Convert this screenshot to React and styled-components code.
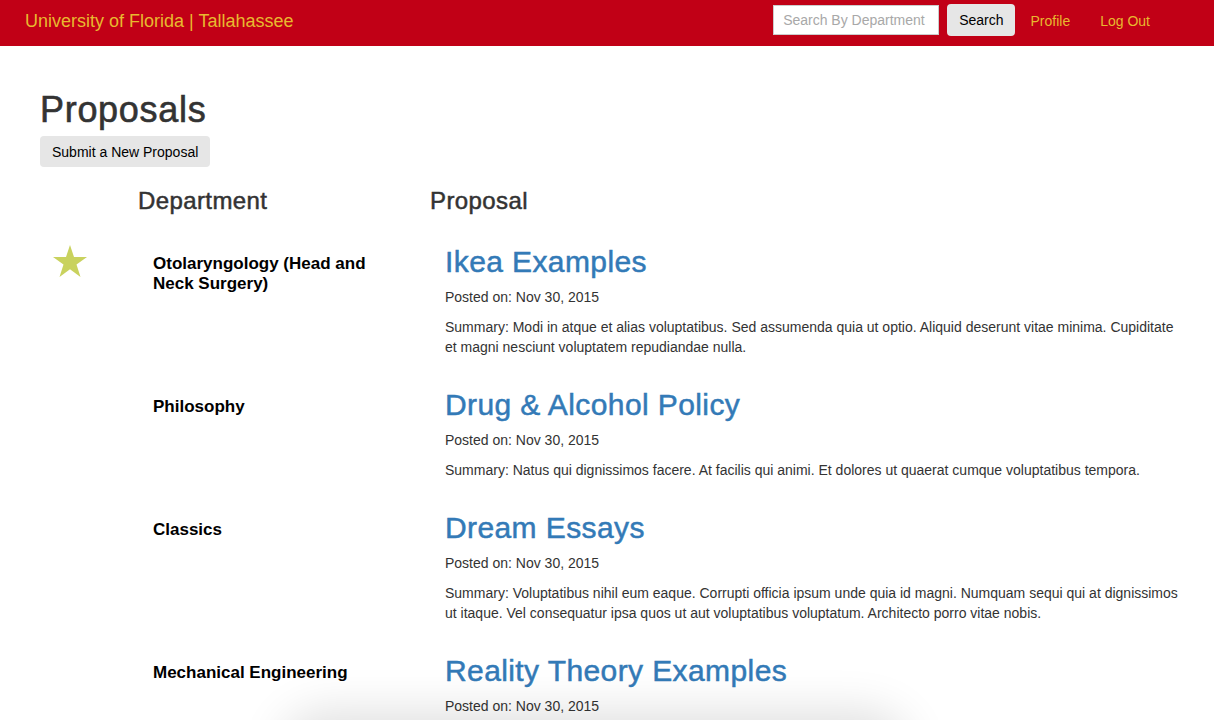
import React from "react";
import styled, { createGlobalStyle } from "styled-components";

const GlobalStyle = createGlobalStyle`
  html, body {
    margin: 0;
    padding: 0;
    background: #fff;
    font-family: "Liberation Sans", Arial, Helvetica, sans-serif;
    font-size: 14px;
    line-height: 20px;
    color: #333;
    overflow: hidden;
  }
`;

const proposals = [
  {
    dept: "Otolaryngology (Head and Neck Surgery)",
    title: "Ikea Examples",
    date: "Nov 30, 2015",
    summary:
      "Modi in atque et alias voluptatibus. Sed assumenda quia ut optio. Aliquid deserunt vitae minima. Cupiditate et magni nesciunt voluptatem repudiandae nulla.",
    starred: true,
  },
  {
    dept: "Philosophy",
    title: "Drug & Alcohol Policy",
    date: "Nov 30, 2015",
    summary:
      "Natus qui dignissimos facere. At facilis qui animi. Et dolores ut quaerat cumque voluptatibus tempora.",
  },
  {
    dept: "Classics",
    title: "Dream Essays",
    date: "Nov 30, 2015",
    summary:
      "Voluptatibus nihil eum eaque. Corrupti officia ipsum unde quia id magni. Numquam sequi qui at dignissimos ut itaque. Vel consequatur ipsa quos ut aut voluptatibus voluptatum. Architecto porro vitae nobis.",
  },
  {
    dept: "Mechanical Engineering",
    title: "Reality Theory Examples",
    date: "Nov 30, 2015",
    summary:
      "Quia voluptatem omnis et. Sunt ut veniam quia. Dolorem ipsa sed et sint.",
  },
];

const Navbar = styled.nav`
  height: 46px;
  background: #c10016;
  display: flex;
  align-items: center;
  padding: 0 49px 0 25px;
`;

const Brand = styled.a`
  color: #e8b92f;
  font-size: 18px;
  line-height: 20px;
  margin-top: -5px;
  text-decoration: none;
`;

const NavRight = styled.div`
  margin-left: auto;
  display: flex;
  align-items: center;
  margin-top: -7px;
`;

const SearchInput = styled.input`
  box-sizing: border-box;
  width: 166px;
  height: 30px;
  border: 1px solid #ccc;
  border-radius: 0;
  padding: 0 9px;
  font-family: inherit;
  font-size: 14px;
  color: #555;
  outline: none;
  &::placeholder {
    color: #a8a8a8;
  }
`;

const Button = styled.button`
  box-sizing: border-box;
  height: ${(p) => p.$h || 32}px;
  padding: 0 12px;
  border: 0;
  border-radius: 4px;
  background: #e6e6e6;
  color: #000;
  font-family: inherit;
  font-size: 14px;
  cursor: pointer;
`;

const SearchButton = styled(Button)`
  margin-left: 8px;
`;

const NavLink = styled.a`
  color: #e8b92f;
  font-size: 14px;
  text-decoration: none;
  padding: 0 15px;
  margin-top: 2px;
`;

const Page = styled.main`
  padding: 0 0 0 40px;
`;

const Title = styled.h1`
  font-size: 36px;
  line-height: 40px;
  font-weight: 500;
  letter-spacing: 0.7px;
  -webkit-text-stroke: 0.6px #333;
  color: #333;
  margin: 44px 0 6px;
`;

const Table = styled.div`
  margin-left: -40px;
  padding-left: 40px;
  display: grid;
  grid-template-columns: 98px 292px 1fr;
`;

const HeadCell = styled.h3`
  font-size: 24px;
  line-height: 26px;
  font-weight: 500;
  letter-spacing: 0.4px;
  -webkit-text-stroke: 0.5px #333;
  color: #333;
  margin: 21px 0 10px;
  grid-column: ${(p) => p.$col};
`;

const Row = styled.div`
  display: contents;
`;

const StarCell = styled.div`
  padding: 21px 0 0 13px;
`;

const DeptCell = styled.div`
  padding: 0 15px;
`;

const DeptName = styled.h4`
  font-size: 17px;
  line-height: 20px;
  font-weight: 700;
  color: #000;
  margin: 30px 0 0;
  max-width: 236px;
`;

const ProposalCell = styled.div`
  padding: 0 29px 0 15px;
`;

const ProposalTitle = styled.h2`
  font-size: 30px;
  line-height: 33px;
  font-weight: 500;
  letter-spacing: 0.4px;
  margin: 21px 0 9px;
  a {
    color: #337ab7;
    -webkit-text-stroke: 0.5px #337ab7;
    text-decoration: none;
  }
`;

const Text = styled.p`
  margin: 0 0 10px;
  font-size: 14px;
  line-height: 20px;
  color: #333;
`;

const BottomShade = styled.div`
  position: fixed;
  left: 290px;
  width: 610px;
  bottom: -70px;
  height: 70px;
  border-radius: 40px;
  box-shadow: 0 0 45px 10px rgba(0, 0, 0, 0.12);
  background: #fff;
`;

const Star = () => (
  <svg width="34" height="32" viewBox="0 0 34 32">
    <polygon
      points="17,0 21,12 34,12 23.5,19.5 27.5,32 17,24.3 6.5,32 10.5,19.5 0,12 13,12"
      fill="#c9d25e"
    />
  </svg>
);

export default function App() {
  return (
    <>
      <GlobalStyle />
      <Navbar>
        <Brand href="#">University of Florida | Tallahassee</Brand>
        <NavRight>
          <SearchInput placeholder="Search By Department" />
          <SearchButton $h={32}>Search</SearchButton>
          <NavLink href="#">Profile</NavLink>
          <NavLink href="#">Log Out</NavLink>
        </NavRight>
      </Navbar>
      <Page>
        <Title>Proposals</Title>
        <Button $h={31}>Submit a New Proposal</Button>
        <Table>
          <HeadCell $col={2}>Department</HeadCell>
          <HeadCell $col={3}>Proposal</HeadCell>
          {proposals.map((p) => (
            <Row key={p.title}>
              <StarCell>{p.starred && <Star />}</StarCell>
              <DeptCell>
                <DeptName>{p.dept}</DeptName>
              </DeptCell>
              <ProposalCell>
                <ProposalTitle>
                  <a href="#">{p.title}</a>
                </ProposalTitle>
                <Text>Posted on: {p.date}</Text>
                <Text>Summary: {p.summary}</Text>
              </ProposalCell>
            </Row>
          ))}
        </Table>
      </Page>
      <BottomShade />
    </>
  );
}
